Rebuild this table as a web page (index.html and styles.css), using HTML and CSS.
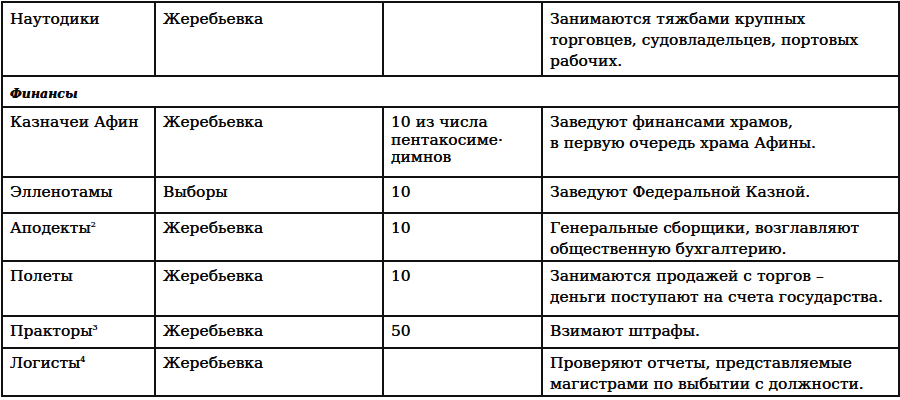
FILE: index.html
```html
<!DOCTYPE html>
<html lang="ru">
<head>
<meta charset="utf-8">
<link rel="stylesheet" href="styles.css">
</head>
<body>
<table class="tbl">
  <colgroup>
    <col class="c1"><col class="c2"><col class="c3"><col class="c4">
  </colgroup>
  <tr class="r1">
    <td>Наутодики</td>
    <td>Жеребьевка</td>
    <td></td>
    <td>Занимаются тяжбами крупных<br>торговцев, судовладельцев, портовых<br>рабочих.</td>
  </tr>
  <tr class="r2">
    <td colspan="4" class="section">Финансы</td>
  </tr>
  <tr class="r3">
    <td>Казначеи Афин</td>
    <td>Жеребьевка</td>
    <td class="num">10 из числа<br>пентакосиме·<br>димнов</td>
    <td>Заведуют финансами храмов,<br>в первую очередь храма Афины.</td>
  </tr>
  <tr class="r4">
    <td>Элленотамы</td>
    <td>Выборы</td>
    <td class="num">10</td>
    <td>Заведуют Федеральной Казной.</td>
  </tr>
  <tr class="r5">
    <td>Аподекты<sup>2</sup></td>
    <td>Жеребьевка</td>
    <td class="num">10</td>
    <td>Генеральные сборщики, возглавляют<br>общественную бухгалтерию.</td>
  </tr>
  <tr class="r6">
    <td>Полеты</td>
    <td>Жеребьевка</td>
    <td class="num">10</td>
    <td>Занимаются продажей с торгов –<br>деньги поступают на счета государства.</td>
  </tr>
  <tr class="r7">
    <td>Практоры<sup>3</sup></td>
    <td>Жеребьевка</td>
    <td class="num">50</td>
    <td>Взимают штрафы.</td>
  </tr>
  <tr class="r8">
    <td>Логисты<sup>4</sup></td>
    <td>Жеребьевка</td>
    <td></td>
    <td>Проверяют отчеты, представляемые<br>магистрами по выбытии с должности.</td>
  </tr>
</table>
</body>
</html>
```
FILE: styles.css
```css
html, body {
  margin: 0;
  padding: 0;
  background: #ffffff;
}
body {
  padding: 1px 0 0 1px;
}
.tbl {
  border-collapse: collapse;
  table-layout: fixed;
  width: 897px;
  font-family: "DejaVu Serif", "Liberation Serif", serif;
  font-size: 15.5px;
  line-height: 21px;
  color: #0a0a0a;
  text-shadow: 0 0 0.6px #000;
}
.c1 { width: 153px; }
.c2 { width: 228px; }
.c3 { width: 159px; }
.c4 { width: 357px; }
.tbl td {
  border: 2px solid #111111;
  vertical-align: top;
  padding: 4px 6px 0 7px;
  white-space: nowrap;
  overflow: hidden;
}
.r1 td {
  padding-top: 6px;
}
.tbl td.num {
  line-height: 17.5px;
  padding-top: 6px;
}
.tbl td.section {
  font-size: 12.5px;
  font-weight: bold;
  font-style: italic;
  padding-top: 6px;
}
.tbl sup {
  font-size: 8px;
  line-height: 0;
  vertical-align: 6px;
}
.r1 { height: 74px; }
.r2 { height: 31px; }
.r3 { height: 70px; }
.r4 { height: 36px; }
.r5 { height: 47px; }
.r6 { height: 55px; }
.r7 { height: 32px; }
.r8 { height: 44px; }
```
